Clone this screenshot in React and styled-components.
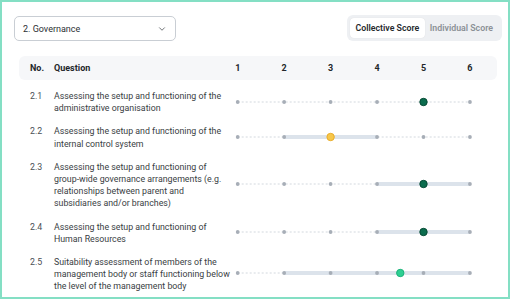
import React from "react"
import styled, { createGlobalStyle } from "styled-components"
import { ChevronDown } from "lucide-react"

const GlobalStyle = createGlobalStyle`
  body {
    margin: 0;
    background: #ffffff;
    font-family: Roboto, "Liberation Sans", Arial, sans-serif;
  }
`

const COL = 46.45
const START = 5.7

const StyledFrame = styled.div`
  box-sizing: border-box;
  width: 510px;
  height: 299px;
  border: 2px solid #84dfc4;
  background: #ffffff;
  padding: 13px 6px 0 12px;
  overflow: hidden;
`

const StyledTopBar = styled.div`
  display: flex;
  justify-content: space-between;
  align-items: center;
`

const StyledSelect = styled.div`
  box-sizing: border-box;
  width: 162px;
  height: 25px;
  display: flex;
  align-items: center;
  justify-content: space-between;
  padding: 0 8px 0 8px;
  border: 1px solid #c9ced4;
  border-radius: 5px;
  font-size: 9px;
  color: #2b2f33;
  margin-top: 1px;

  svg {
    color: #55595e;
  }
`

const StyledToggle = styled.div`
  box-sizing: border-box;
  height: 26px;
  display: flex;
  align-items: center;
  padding: 3px;
  background: #eef0f3;
  border-radius: 6px;
`

const StyledToggleButton = styled.div`
  height: 20px;
  display: flex;
  align-items: center;
  padding: ${p => (p.$active ? "0 5.5px" : "0 6px 0 5px")};
  border-radius: 4px;
  font-size: 8.8px;
  font-weight: 600;
  background: ${p => (p.$active ? "#ffffff" : "transparent")};
  color: ${p => (p.$active ? "#25292d" : "#8b9096")};
  box-shadow: ${p => (p.$active ? "0 0 1px rgba(0,0,0,0.12)" : "none")};
`

const StyledTable = styled.div`
  margin: 15px 5px 0 5px;
`

const StyledHeader = styled.div`
  height: 24px;
  display: grid;
  grid-template-columns: 24px 160.5px repeat(6, ${COL}px);
  align-items: center;
  padding-left: 11px;
  background: #f6f7f9;
  border-radius: 6px;
  font-size: 9px;
  font-weight: 700;
  color: #23272b;
`

const StyledHeadNum = styled.span`
  text-align: center;
`

const StyledBody = styled.div`
  margin-top: 4.5px;
`

const StyledRow = styled.div`
  display: grid;
  grid-template-columns: 24px 179px 1fr;
  padding: 5.5px 0 5.5px 11px;
  font-size: 8.8px;
  line-height: 12.2px;
  color: #393e43;
`

const StyledNo = styled.span`
  color: #4a4f55;
`

const StyledQuestion = styled.span``

const StyledTrackCell = styled.div`
  display: flex;
  align-items: center;
  margin-left: -1px;
  margin-top: ${p => p.$shift}px;
`

const colors = {
  dark: { fill: "#0b6c4e", stroke: "#054a34" },
  yellow: { fill: "#f7c74a", stroke: "#e9ad2b" },
  green: { fill: "#2ecf92", stroke: "#1cb27a" },
}

const x = v => START + (v - 1) * COL

const Track = ({ value, range, tone }) => {
  const dots = [1, 2, 3, 4, 5, 6]
  const c = colors[tone]
  return (
    <svg width="244" height="12" viewBox="0 0 244 12">
      <line
        x1={x(1)}
        y1="6"
        x2={x(6)}
        y2="6"
        stroke="#d3d8de"
        strokeWidth="1"
        strokeDasharray="2 2"
      />
      {range && (
        <line
          x1={x(range[0])}
          y1="6"
          x2={x(range[1])}
          y2="6"
          stroke="#dce3eb"
          strokeWidth="4"
        />
      )}
      {dots.map(d => (
        <circle key={d} cx={x(d)} cy="6" r="1.9" fill="#a7aeb7" />
      ))}
      <circle
        cx={x(value)}
        cy="6"
        r="3.7"
        fill={c.fill}
        stroke={c.stroke}
        strokeWidth="1"
      />
    </svg>
  )
}

const rows = [
  {
    no: "2.1",
    text: "Assessing the setup and functioning of the administrative organisation",
    value: 5,
    tone: "dark",
    shift: -1,
  },
  {
    no: "2.2",
    text: "Assessing the setup and functioning of the internal control system",
    value: 3,
    range: [2, 4],
    tone: "yellow",
    shift: -1,
  },
  {
    no: "2.3",
    text:
      "Assessing the setup and functioning of group-wide governance arrangements (e.g. relationships between parent and subsidiaries and/or branches)",
    value: 5,
    range: [4, 6],
    tone: "dark",
    shift: -2,
  },
  {
    no: "2.4",
    text: "Assessing the setup and functioning of Human Resources",
    value: 5,
    range: [4, 6],
    tone: "dark",
    shift: -1,
  },
  {
    no: "2.5",
    text:
      "Suitability assessment of members of the management body or staff functioning below the level of the management body",
    value: 4.5,
    range: [2, 6],
    tone: "green",
    shift: -2,
  },
]

const App = () => {
  return (
    <>
      <GlobalStyle />
      <StyledFrame>
        <StyledTopBar>
          <StyledSelect>
            <span>2. Governance</span>
            <ChevronDown size={10} strokeWidth={2} />
          </StyledSelect>
          <StyledToggle>
            <StyledToggleButton $active>Collective Score</StyledToggleButton>
            <StyledToggleButton>Individual Score</StyledToggleButton>
          </StyledToggle>
        </StyledTopBar>

        <StyledTable>
          <StyledHeader>
            <span>No.</span>
            <span>Question</span>
            {[1, 2, 3, 4, 5, 6].map(n => (
              <StyledHeadNum key={n}>{n}</StyledHeadNum>
            ))}
          </StyledHeader>
          <StyledBody>
            {rows.map(row => (
              <StyledRow key={row.no}>
                <StyledNo>{row.no}</StyledNo>
                <StyledQuestion>{row.text}</StyledQuestion>
                <StyledTrackCell $shift={row.shift}>
                  <Track value={row.value} range={row.range} tone={row.tone} />
                </StyledTrackCell>
              </StyledRow>
            ))}
          </StyledBody>
        </StyledTable>
      </StyledFrame>
    </>
  )
}

export default App
